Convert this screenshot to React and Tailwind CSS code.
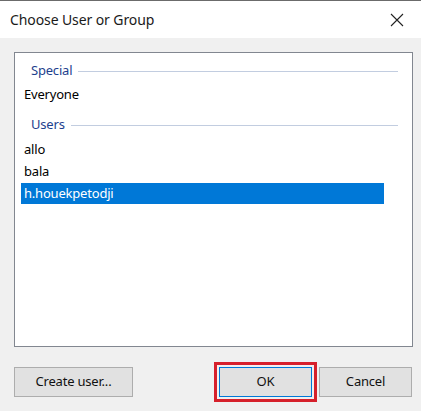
export default function App() {
  const font = { fontFamily: '"Noto Sans", "Open Sans", sans-serif' }

  return (
    <div className="w-[421px] h-[411px] bg-[#f0f0f0] flex flex-col border-t border-[#6b6b6b] text-[#000]" style={font}>

      <div className="h-[37px] bg-white flex items-center justify-between pl-[10px] pr-[17px]">
        <span className="text-[14px] text-[#1a1a1a] tracking-[-0.1px]">Choose User or Group</span>
        <svg width="14" height="14" viewBox="0 0 14 14">
          <path d="M1 1 L13 13 M13 1 L1 13" stroke="#222" strokeWidth="1.1" />
        </svg>
      </div>

      <div className="flex-1 pl-[14px] pr-[8px] pt-[14px]">
        <div className="h-[295px] bg-white border border-[#828790] pt-[9px] text-[13px] tracking-[-0.2px]">

          <div className="flex items-center pl-[16px] pr-[14px] h-[18px]">
            <span className="text-[#1e3f8e]">Special</span>
            <div className="flex-1 h-px bg-[#c2cde0] ml-[6px]" />
          </div>
          <div className="pl-[9px] h-[22px] flex items-center mt-[4px]">Everyone</div>

          <div className="flex items-center pl-[16px] pr-[14px] h-[18px] mt-[10px]">
            <span className="text-[#1e3f8e]">Users</span>
            <div className="flex-1 h-px bg-[#c2cde0] ml-[6px]" />
          </div>
          <div className="pl-[9px] h-[22px] flex items-center mt-[5px]">allo</div>
          <div className="pl-[9px] h-[22px] flex items-center">bala</div>
          <div className="ml-[6px] w-[363px] h-[21px] flex items-center pl-[3px] bg-[#0078d7] text-white">h.houekpetodji</div>
        </div>

        <div className="flex items-center mt-[15px] text-[13px] tracking-[-0.2px]">
          <button className="w-[119px] h-[30px] bg-[#e1e1e1] border border-[#adadad] text-[#111]">Create user...</button>
          <div className="ml-auto border-[3px] border-[#d6202b] p-[2px] mr-[2px]">
            <button className="w-[93px] h-[30px] bg-[#e1e1e1] border border-[#0078d7] text-[#111]">OK</button>
          </div>
          <button className="w-[93px] h-[30px] bg-[#e1e1e1] border border-[#adadad] text-[#111] mr-[1px]">Cancel</button>
        </div>
      </div>
    </div>
  )
}
